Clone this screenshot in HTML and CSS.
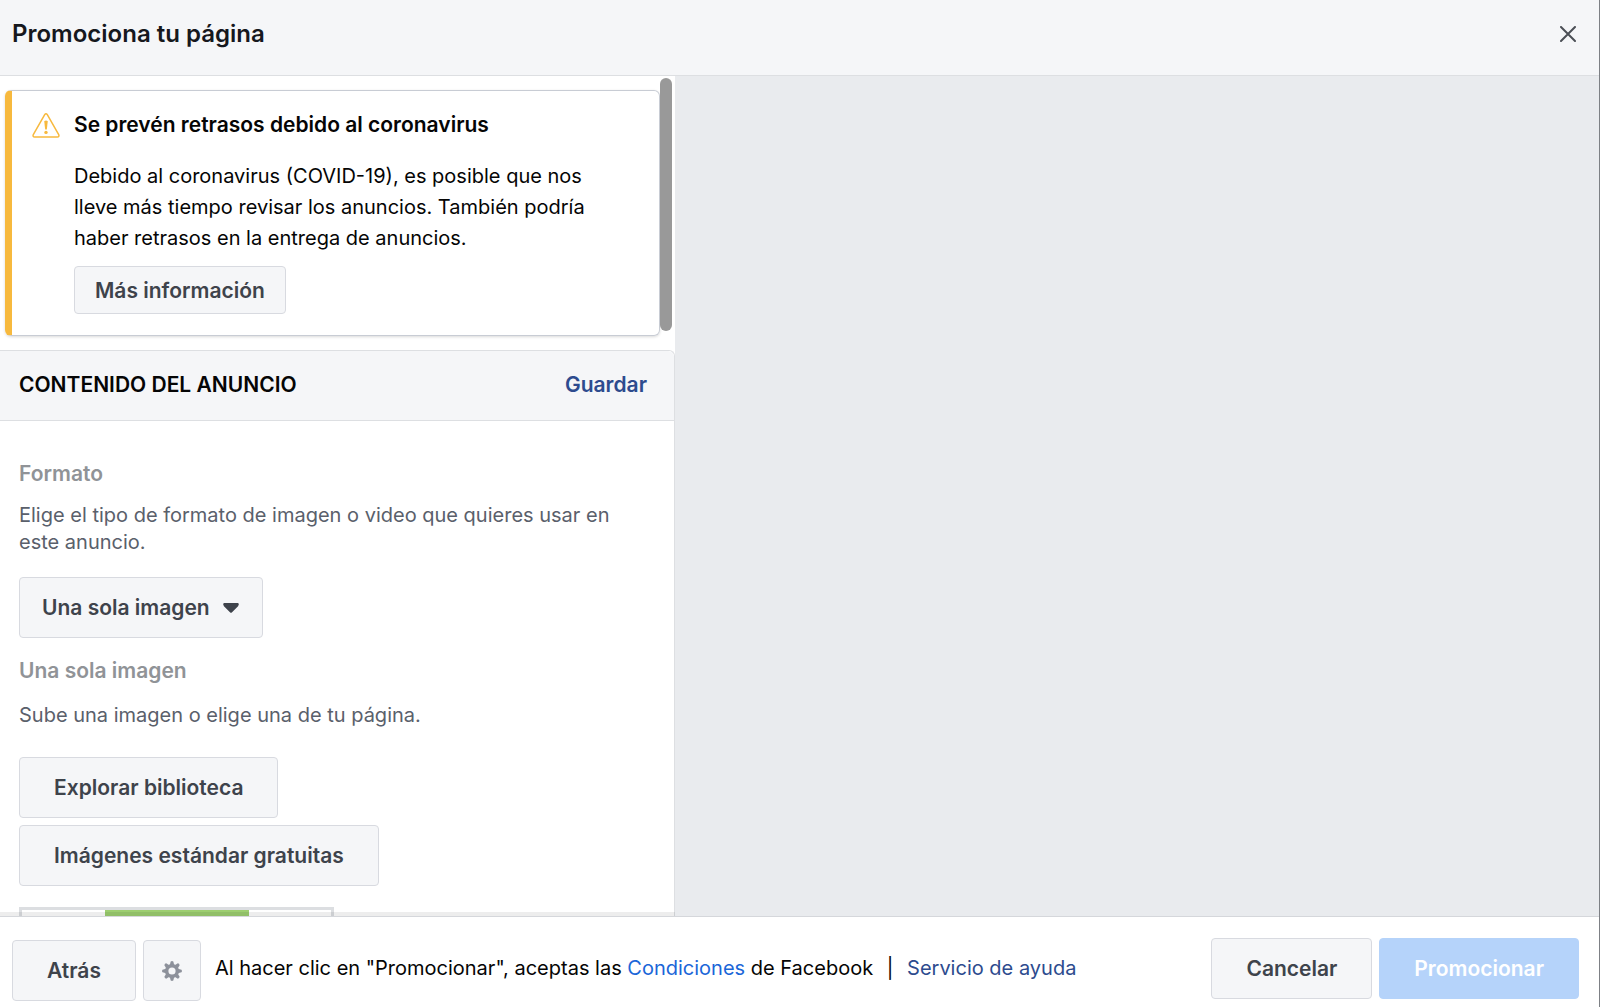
FILE: index.html
```html
<!DOCTYPE html>
<html lang="es">
<head>
  <meta charset="UTF-8" />
  <meta name="viewport" content="width=device-width, initial-scale=1.0"/>
  <title>Promociona tu página</title>
  <link rel="stylesheet" href="styles.css">
</head>

<body>
  <div class="dialog">
    <header class="dialog-header">
      <h1>Promociona tu página</h1>
      <button class="close-btn" type="button" aria-label="Cerrar">
        <svg width="16" height="16" viewBox="0 0 16 16" fill="none" stroke="#4b4f56" stroke-width="2" stroke-linecap="round">
          <path d="M1 1L15 15M15 1L1 15"/>
        </svg>
      </button>
    </header>

    <main class="dialog-body">
      <div class="editor">
        <section class="alert">
          <svg class="alert-icon" width="28" height="25" viewBox="0 0 28 25" fill="none" stroke="#f7b93e" stroke-width="1.5" stroke-linejoin="round">
            <path d="M12.7 1.7Q14 -.2 15.3 1.7L26.7 21.6Q27.6 23.9 25.3 24H2.7Q.4 23.9 1.3 21.6Z"/>
            <path d="M12.2 8.2Q14 6.8 15.8 8.2L14.8 16.5H13.2Z" fill="#f7b93e" stroke="none"/>
            <circle cx="14" cy="19.4" r="1.7" fill="#f7b93e" stroke="none"/>
          </svg>
          <div class="alert-content">
            <h2>Se prevén retrasos debido al coronavirus</h2>
            <p>Debido al coronavirus (COVID-19), es posible que nos lleve más tiempo revisar los anuncios. También podría haber retrasos en la entrega de anuncios.</p>
            <button class="btn btn-small" type="button">Más información</button>
          </div>
        </section>

        <section class="card">
          <div class="card-header">
            <h2>CONTENIDO DEL ANUNCIO</h2>
            <a href="#">Guardar</a>
          </div>
          <div class="card-body">
            <label class="field-title" for="formato">Formato</label>
            <p class="format-help">Elige el tipo de formato de imagen o video que quieres usar en este anuncio.</p>
            <div class="select-box">
              <select id="formato">
                <option>Una sola imagen</option>
              </select>
              <svg width="16" height="10" viewBox="0 0 16 10" fill="#3e434b">
                <path d="M1.2 0H14.8Q16 .2 15.8 1.5Q15.3 3.4 13.8 4.6L8.8 9.4Q8 10 7.2 9.4L2.2 4.6Q.7 3.4 .2 1.5Q0 .2 1.2 0Z"/>
              </svg>
            </div>

            <h3 class="field-title">Una sola imagen</h3>
            <p class="image-help">Sube una imagen o elige una de tu página.</p>
            <div class="image-buttons">
              <button class="btn" type="button">Explorar biblioteca</button>
              <button class="btn" type="button">Imágenes estándar gratuitas</button>
            </div>
            <div class="preview">
              <div class="preview-image"></div>
            </div>
          </div>
        </section>
        <div class="scroll-thumb"></div>
        <div class="editor-shade"></div>
      </div>
      <div class="ad-preview"></div>
    </main>

    <footer class="dialog-footer">
      <div class="footer-left">
        <button class="btn" type="button">Atrás</button>
        <button class="btn btn-icon" type="button" aria-label="Configuración">
          <svg width="20" height="20" viewBox="-10 -10 20 20" fill="#8d919b">
            <path fill-rule="evenodd" d="M-7 0A7 7 0 1 1 7 0A7 7 0 1 1 -7 0ZM-3.6 0A3.6 3.6 0 1 0 3.6 0A3.6 3.6 0 1 0 -3.6 0Z"/>
            <g id="teeth">
              <path id="tooth" d="M-2.2 -6L-1.3 -9.5Q0 -10.4 1.3 -9.5L2.2 -6Z"/>
              <use href="#tooth" transform="rotate(90)"/>
              <use href="#tooth" transform="rotate(180)"/>
              <use href="#tooth" transform="rotate(270)"/>
            </g>
            <use href="#teeth" transform="rotate(45)"/>
          </svg>
        </button>
      </div>
      <p class="terms">Al hacer clic en "Promocionar", aceptas las <a class="terms-link" href="#">Condiciones</a> de Facebook <span class="divider">|</span> <a href="#">Servicio de ayuda</a></p>
      <div class="footer-actions">
        <button class="btn" type="button">Cancelar</button>
        <button class="btn btn-primary" type="button" disabled>Promocionar</button>
      </div>
    </footer>
  </div>
</body>
</html>
```

FILE: styles.css
```css
* {
  box-sizing: border-box;
}

body {
  margin: 0;
  font-family: Inter, "Liberation Sans", sans-serif;
  font-size: 20px;
  color: #050505;
  background: #fff;
}

h1, h2, h3, p {
  margin: 0;
}

a {
  color: #2d4b8e;
  text-decoration: none;
}

button, select {
  font-family: inherit;
  cursor: pointer;
}

.dialog {
  display: flex;
  flex-direction: column;
  height: 100vh;
  border-right: 1px solid #7d8085;
}

/* Header */
.dialog-header {
  display: flex;
  justify-content: space-between;
  align-items: center;
  padding: 11px 23px 19px 12px;
  background: #f5f6f8;
  border-bottom: 1px solid #dddfe2;
}

.dialog-header h1 {
  font-size: 24px;
  line-height: 45px;
  font-weight: 600;
  color: #16181d;
}

.close-btn {
  display: flex;
  padding: 0;
  border: none;
  background: none;
}

/* Body */
.dialog-body {
  flex: 1;
  min-height: 0;
  display: grid;
  grid-template-columns: 675fr 924fr;
}

.editor {
  position: relative;
  min-height: 0;
  overflow: hidden;
  background: #fff;
}

.ad-preview {
  background: #e9ebee;
}

.scroll-thumb {
  position: absolute;
  top: 2px;
  right: 3px;
  width: 12px;
  height: 253px;
  border-radius: 6px;
  background: #999;
}

.editor-shade {
  position: absolute;
  left: 0;
  right: 0;
  bottom: 0;
  height: 4px;
  background: rgba(0, 0, 0, 0.07);
}

.alert {
  display: flex;
  align-items: flex-start;
  gap: 14px;
  margin: 14px 15px 14px 5px;
  padding: 20px 56px 21px 20px;
  border: 1px solid #c8ccd4;
  border-left: 7px solid #f7b93e;
  border-radius: 6px;
  box-shadow: 0 1px 3px rgba(0, 0, 0, 0.15);
}

.alert-icon {
  flex: none;
  margin-top: 2px;
}

.alert h2 {
  margin-bottom: 22px;
  font-size: 21px;
  line-height: 28px;
  font-weight: 600;
}

.alert p {
  margin-bottom: 12px;
  line-height: 31px;
}

.btn {
  height: 61px;
  padding: 0 34px;
  border: 1px solid #d8dae0;
  border-radius: 4px;
  background: #f5f6f8;
  color: #3e434b;
  font-size: 21px;
  font-weight: 600;
}

.btn-small {
  height: 48px;
  padding: 0 20px;
}

.btn-icon {
  display: flex;
  align-items: center;
  padding: 0 18px;
}

.btn-primary {
  border-color: #b5d3fa;
  background: #b5d3fa;
  color: #fff;
}

/* Ad content */
.card {
  border-top: 1px solid #dddfe2;
  border-right: 1px solid #dddfe2;
  border-radius: 0 6px 0 0;
}

.card-header {
  display: flex;
  justify-content: space-between;
  align-items: center;
  height: 70px;
  padding: 0 27px 2px 19px;
  border-bottom: 1px solid #dddfe2;
  border-radius: 0 6px 0 0;
  background: #f5f6f8;
}

.card-header h2 {
  font-size: 21px;
  font-weight: 600;
}

.card-header a {
  font-size: 21px;
  font-weight: 600;
}

.card-body {
  padding: 39px 19px 0;
}

.field-title {
  display: block;
  color: #909397;
  font-size: 21px;
  line-height: 28px;
  font-weight: 600;
}

.card-body p {
  color: #5a606b;
  line-height: 27px;
}

.card-body .format-help {
  margin: 14px 0 21px;
}

.select-box {
  position: relative;
  width: fit-content;
  margin-bottom: 19px;
}

.select-box select {
  display: block;
  height: 61px;
  padding: 0 52px 0 22px;
  border: 1px solid #d8dae0;
  border-radius: 4px;
  background: #f5f6f8;
  color: #3e434b;
  font-size: 21px;
  font-weight: 600;
  appearance: none;
}

.select-box svg {
  position: absolute;
  top: 26px;
  right: 24px;
  pointer-events: none;
}

.card-body .image-help {
  margin: 17px 0 28px;
}

.image-buttons {
  display: flex;
  flex-direction: column;
  align-items: flex-start;
  gap: 7px;
}

.preview {
  display: flex;
  justify-content: center;
  width: 315px;
  margin-top: 21px;
  border: 3px solid #dcdee1;
}

.preview-image {
  width: 144px;
  height: 160px;
  background: #9dce70;
}

/* Footer */
.dialog-footer {
  display: flex;
  align-items: flex-start;
  padding: 21px 20px 6px 12px;
  border-top: 1px solid #d5d7db;
  background: #fff;
}

.footer-left {
  display: flex;
  gap: 7px;
  padding-top: 2px;
}

.terms {
  margin-left: 14px;
  line-height: 61px;
}

.terms-link {
  color: #1b66d8;
}

.divider {
  margin: 0 8px;
}

.footer-actions {
  display: flex;
  gap: 7px;
  margin-left: auto;
}
```
